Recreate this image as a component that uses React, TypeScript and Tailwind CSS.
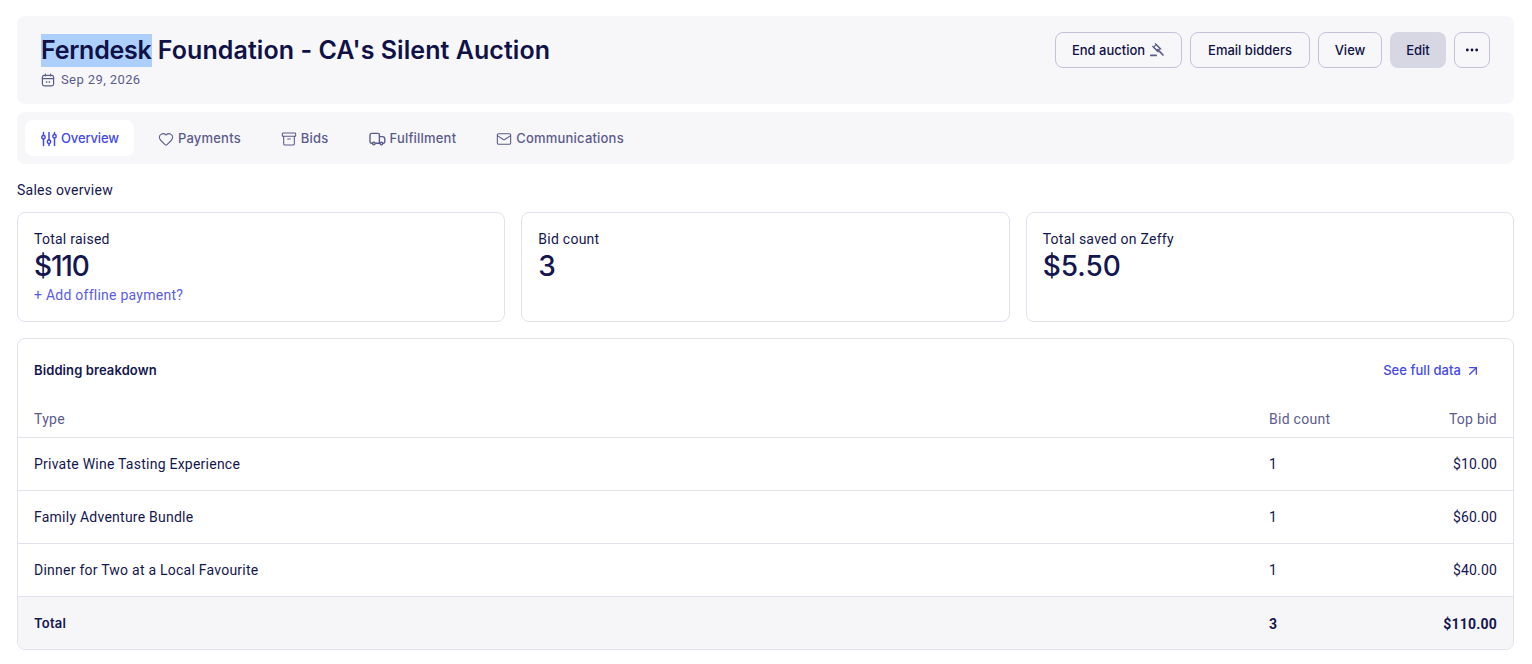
import { Heart, Archive, Mail, Ellipsis, ArrowUpRight } from "lucide-react";

function SlidersIcon() {
  return (
    <svg width="16" height="16" viewBox="0 0 16 16" fill="none" stroke="currentColor" strokeWidth="1.5" strokeLinecap="round">
      <path d="M2.5 1.5V4.2M2.5 8.2V14.5M8 1.5V8.8M8 12.8V14.5M13.5 1.5V3.2M13.5 7.2V14.5" />
      <circle cx="2.5" cy="6.2" r="1.7" />
      <circle cx="8" cy="10.8" r="1.7" />
      <circle cx="13.5" cy="5.2" r="1.7" />
    </svg>
  );
}

function TruckIcon() {
  return (
    <svg width="17" height="16" viewBox="0 0 17 16" fill="none" stroke="currentColor" strokeWidth="1.4" strokeLinejoin="round">
      <path d="M3.2 12.2H2.4A1.4 1.4 0 0 1 1 10.8V4.2A1.8 1.8 0 0 1 2.8 2.4H9a1.4 1.4 0 0 1 1.4 1.4V12.2H6.4" />
      <path d="M10.4 5.6H13.4A2.4 2.4 0 0 1 15.8 8V10.8A1.4 1.4 0 0 1 14.4 12.2H14M10.4 12.2H10.9" />
      <circle cx="4.8" cy="12.6" r="1.3" />
      <circle cx="12.4" cy="12.6" r="1.3" />
    </svg>
  );
}

function CalendarIcon() {
  return (
    <svg width="14" height="14" viewBox="0 0 14 14" fill="none" stroke="currentColor" strokeWidth="1.2" strokeLinecap="round">
      <rect x="1.4" y="2.4" width="11.2" height="10.4" rx="1.8" />
      <path d="M1.4 5.6H12.6M4.4 1V3M9.6 1V3" />
      <path d="M5.4 9H5.9M8.1 9H8.6" strokeWidth="1.3" />
    </svg>
  );
}

function GavelIcon() {
  return (
    <svg width="16" height="16" viewBox="0 0 16 16" fill="none" stroke="currentColor" strokeLinecap="round">
      <path d="M8.8 7.6L14 13" strokeWidth="1.7" />
      <path d="M7.2 2.6L11 6.4L8.4 9L4.6 5.2Z" strokeWidth="1.2" strokeLinejoin="round" />
      <path d="M6.4 1.6L11.9 7.1M3.6 4.4L9.1 9.9" strokeWidth="1.2" />
      <path d="M1.8 13.4H7.2" strokeWidth="1.7" />
    </svg>
  );
}

const tabs = [
  { label: "Payments", icon: <Heart size={16} strokeWidth={1.6} /> },
  { label: "Bids", icon: <Archive size={16} strokeWidth={1.6} /> },
  { label: "Fulfillment", icon: <TruckIcon /> },
  { label: "Communications", icon: <Mail size={16} strokeWidth={1.6} /> },
];

const rows = [
  ["Private Wine Tasting Experience", "1", "$10.00"],
  ["Family Adventure Bundle", "1", "$60.00"],
  ["Dinner for Two at a Local Favourite", "1", "$40.00"],
];

function Stat({ label, value, link, tight }: { label: string; value: string; link?: string; tight?: boolean }) {
  return (
    <div className="h-[110px] flex-1 rounded-lg border border-[#e2e2ee] bg-white px-4 pt-[18px]">
      <div className="text-[14px] leading-[17px] tracking-[0.25px]">{label}</div>
      <div className={`mt-[1px] font-['Inter'] text-[28px] leading-[34px] font-medium ${tight ? "tracking-[-1.2px]" : ""}`}>{value}</div>
      {link && <div className="mt-[4px] text-[14px] leading-[17px] tracking-[0.25px] text-[#5a5ce6]">{link}</div>}
    </div>
  );
}

function Btn({ children, w }: { children: React.ReactNode; w: string }) {
  return (
    <button className={`flex h-9 ${w} items-center justify-center gap-1 rounded-lg border border-[#c4c2da] pt-[1px] font-['Inter'] text-[13px] font-medium text-[#0f1147]`}>
      {children}
    </button>
  );
}

export default function App() {
  return (
    <div className="flex min-h-[664px] flex-col bg-white pt-4 pr-[18px] pl-[17px] font-['Roboto',sans-serif] text-[#14164f]">
      <div className="flex h-[88px] items-start justify-between rounded-lg bg-[#f7f7fa] pt-4 pr-6 pl-6">
        <div>
          <h1 className="flex h-[35px] items-center pt-[1px] font-['Inter'] text-[25px] leading-[33px] font-semibold text-[#0f1147]">
            <span className="bg-[#acd0fb] tracking-[-0.25px]">Ferndesk</span>
            <span className="whitespace-pre tracking-[0.06px]"> Foundation - CA's Silent Auction</span>
          </h1>
          <div className="mt-[3px] flex items-center gap-[6px] text-[13px] leading-[20px] tracking-[0.4px] text-[#5b5b8c]">
            <CalendarIcon />
            Sep 29, 2026
          </div>
        </div>
        <div className="flex gap-2">
          <Btn w="w-[127px]">End auction <span className="-mt-[1px] text-[#5b5b8c]"><GavelIcon /></span></Btn>
          <Btn w="w-[120px]">Email bidders</Btn>
          <Btn w="w-[64px]">View</Btn>
          <button className="flex h-9 w-[56px] items-center justify-center rounded-lg bg-[#d7d7e3] pt-[1px] font-['Inter'] text-[13px] font-medium text-[#0f1147]">Edit</button>
          <Btn w="w-[36px]"><span className="-mt-[1px]"><Ellipsis size={16} strokeWidth={2.25} /></span></Btn>
        </div>
      </div>

      <div className="mt-2 flex h-[52px] items-center gap-2 rounded-lg bg-[#f7f7fa] pl-2 font-['Inter'] text-[13px] font-medium tracking-[0.2px] text-[#5b5b8c]">
        <div className="flex h-9 w-[109px] items-center gap-1 rounded-lg bg-white pt-[1px] pl-4 tracking-[-0.15px] text-[#4549ea]">
          <SlidersIcon />
          Overview
        </div>
        {tabs.map(({ label, icon }) => (
          <div key={label} className="flex h-9 items-center gap-1 px-4 pt-[1px]">
            {icon}
            {label}
          </div>
        ))}
      </div>

      <div className="mt-[18px] text-[14px] leading-[17px] tracking-[0.25px]">Sales overview</div>

      <div className="mt-[13px] flex gap-4">
        <Stat label="Total raised" value="$110" link="+ Add offline payment?" tight />
        <Stat label="Bid count" value="3" />
        <Stat label="Total saved on Zeffy" value="$5.50" />
      </div>

      <div className="mt-4 h-[312px] overflow-hidden rounded-lg border border-[#e2e2ee]">
        <div className="flex h-[62px] items-center justify-between pt-[2px] pr-[32px] pl-4">
          <div className="font-['Inter'] text-[13px] font-semibold tracking-[0.1px]">Bidding breakdown</div>
          <div className="flex items-center gap-[4px] font-['Inter'] text-[13px] font-medium tracking-[0.05px] text-[#4549ea]">
            See full data <ArrowUpRight size={16} strokeWidth={2} />
          </div>
        </div>
        <div className="flex h-[37px] items-center border-b border-[#e2e2ee] pr-4 pl-4 text-[14px] tracking-[0.28px] text-[#5b5b8c]">
          <div className="flex-1">Type</div>
          <div className="w-[137px]">Bid count</div>
          <div className="w-[91px] text-right">Top bid</div>
        </div>
        {rows.map(([t, c, p]) => (
          <div key={t} className="flex h-[53px] items-center border-b border-[#e2e2ee] pr-4 pl-4 text-[14px] tracking-[0.24px]">
            <div className="flex-1">{t}</div>
            <div className="w-[137px]">{c}</div>
            <div className="w-[91px] text-right tracking-[0.15px]">{p}</div>
          </div>
        ))}
        <div className="flex h-[52px] items-center bg-[#f6f6f9] pt-[2px] pr-4 pl-4 text-[14px] font-bold tracking-[0.2px]">
          <div className="flex-1 font-['Inter'] text-[13px] font-semibold">Total</div>
          <div className="w-[137px]">3</div>
          <div className="w-[91px] text-right">$110.00</div>
        </div>
      </div>
    </div>
  );
}
